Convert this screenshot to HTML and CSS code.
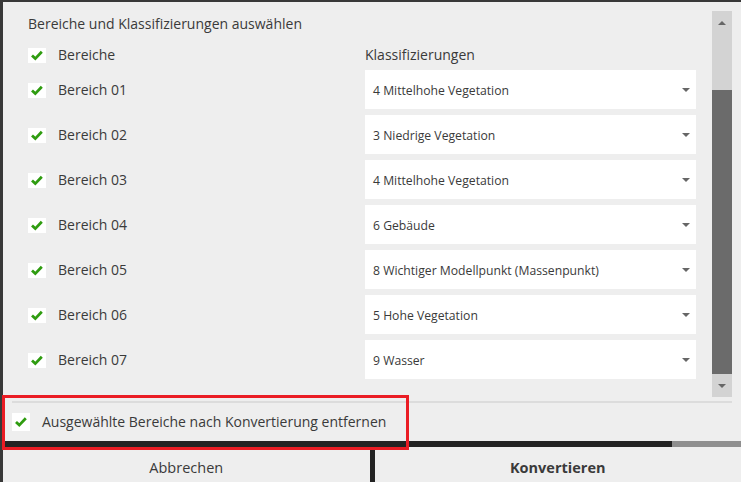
FILE: index.html
```html
<!DOCTYPE html>
<html lang="de">
<head>
<meta charset="utf-8">
<title>Bereiche und Klassifizierungen</title>
<link rel="stylesheet" href="styles.css">
</head>
<body>
<div class="window">
  <div class="main">
    <div class="list">
      <div class="heading">Bereiche und Klassifizierungen auswählen</div>
      <div class="grid header">
        <label class="check-label"><span class="box"><svg viewBox="0 0 18 15" width="18" height="15"><path d="M4 7.5 L7.3 10.6 L13.8 3.8" /></svg></span>Bereiche</label>
        <div class="col-title">Klassifizierungen</div>
      </div>
      <div class="rows">
        <div class="grid row">
          <label class="check-label"><span class="box"><svg viewBox="0 0 18 15" width="18" height="15"><path d="M4 7.5 L7.3 10.6 L13.8 3.8" /></svg></span>Bereich 01</label>
          <div class="select"><span>4 Mittelhohe Vegetation</span><i class="caret"></i></div>
        </div>
        <div class="grid row">
          <label class="check-label"><span class="box"><svg viewBox="0 0 18 15" width="18" height="15"><path d="M4 7.5 L7.3 10.6 L13.8 3.8" /></svg></span>Bereich 02</label>
          <div class="select"><span>3 Niedrige Vegetation</span><i class="caret"></i></div>
        </div>
        <div class="grid row">
          <label class="check-label"><span class="box"><svg viewBox="0 0 18 15" width="18" height="15"><path d="M4 7.5 L7.3 10.6 L13.8 3.8" /></svg></span>Bereich 03</label>
          <div class="select"><span>4 Mittelhohe Vegetation</span><i class="caret"></i></div>
        </div>
        <div class="grid row">
          <label class="check-label"><span class="box"><svg viewBox="0 0 18 15" width="18" height="15"><path d="M4 7.5 L7.3 10.6 L13.8 3.8" /></svg></span>Bereich 04</label>
          <div class="select"><span>6 Gebäude</span><i class="caret"></i></div>
        </div>
        <div class="grid row">
          <label class="check-label"><span class="box"><svg viewBox="0 0 18 15" width="18" height="15"><path d="M4 7.5 L7.3 10.6 L13.8 3.8" /></svg></span>Bereich 05</label>
          <div class="select"><span>8 Wichtiger Modellpunkt (Massenpunkt)</span><i class="caret"></i></div>
        </div>
        <div class="grid row">
          <label class="check-label"><span class="box"><svg viewBox="0 0 18 15" width="18" height="15"><path d="M4 7.5 L7.3 10.6 L13.8 3.8" /></svg></span>Bereich 06</label>
          <div class="select"><span>5 Hohe Vegetation</span><i class="caret"></i></div>
        </div>
        <div class="grid row">
          <label class="check-label"><span class="box"><svg viewBox="0 0 18 15" width="18" height="15"><path d="M4 7.5 L7.3 10.6 L13.8 3.8" /></svg></span>Bereich 07</label>
          <div class="select"><span>9 Wasser</span><i class="caret"></i></div>
        </div>
      </div>
    </div>
    <div class="scrollbar">
      <div class="sb-btn"><i class="caret up"></i></div>
      <div class="sb-track"></div>
      <div class="sb-thumb"></div>
      <div class="sb-btn"><i class="caret"></i></div>
    </div>
  </div>
  <div class="separator"></div>
  <div class="option">
    <label class="check-label"><span class="box box-lg"><svg viewBox="0 0 18 18" width="18" height="18"><path d="M4 9 L7.3 12.1 L13.8 5.3" /></svg></span>Ausgewählte Bereiche nach Konvertierung entfernen</label>
  </div>
  <div class="tabbar"><div class="tab-dark"></div><div class="tab-light"></div></div>
  <div class="buttons">
    <div class="btn">Abbrechen</div>
    <div class="divider"></div>
    <div class="btn primary">Konvertieren</div>
  </div>
  <div class="highlight"></div>
</div>
</body>
</html>
```
FILE: styles.css
```css
html, body {
  margin: 0;
  padding: 0;
}
body {
  width: 741px;
  height: 482px;
  overflow: hidden;
  background: #eeeeee;
  font-family: "Open Sans", "Noto Sans", sans-serif;
  color: #3a3a3a;
}
.window {
  position: relative;
  box-sizing: border-box;
  width: 741px;
  height: 482px;
  border-top: 2px solid #383838;
  border-left: 3px solid #383838;
  display: flex;
  flex-direction: column;
}
.main {
  display: flex;
  height: 399px;
}
.list {
  flex: 1;
  padding-left: 25px;
  display: flex;
  flex-direction: column;
}
.heading {
  margin-top: 12px;
  height: 20px;
  line-height: 20px;
  font-size: 14px;
}
.grid {
  display: grid;
  grid-template-columns: 337px 331px;
  align-items: center;
}
.header {
  margin-top: 10px;
  height: 22px;
}
.col-title {
  font-size: 14px;
  line-height: 22px;
}
.rows {
  margin-top: 4px;
  display: flex;
  flex-direction: column;
  gap: 6px;
}
.row {
  height: 39px;
}
.check-label {
  display: flex;
  align-items: center;
  gap: 12px;
  font-size: 14px;
  line-height: 20px;
}
.row .check-label {
  padding-top: 1px;
}
.box {
  width: 18px;
  height: 15px;
  background: #ffffff;
  display: flex;
}
.box-lg {
  height: 18px;
}
.box svg path {
  fill: none;
  stroke: #2f9c10;
  stroke-width: 2.8;
}
.select {
  height: 39px;
  background: #ffffff;
  display: flex;
  align-items: center;
  justify-content: space-between;
  padding: 1px 6px 0 8px;
  box-sizing: border-box;
  font-size: 12.2px;
}
.caret {
  width: 0;
  height: 0;
  border-left: 4px solid transparent;
  border-right: 4px solid transparent;
  border-top: 4px solid #666666;
}
.caret.up {
  border-top: none;
  border-bottom: 4px solid #666666;
}
.scrollbar {
  width: 20px;
  margin: 9px 9px 4px 0;
  display: flex;
  flex-direction: column;
}
.sb-btn {
  height: 23px;
  background: #d3d3d3;
  display: flex;
  align-items: center;
  justify-content: center;
}
.sb-track {
  height: 56px;
  background: #d3d3d3;
}
.sb-thumb {
  flex: 1;
  background: #6b6b6b;
}
.separator {
  height: 2px;
  margin: 0 9px 0 9px;
  background: #dcdcdc;
}
.option {
  height: 38px;
  padding-left: 9px;
  display: flex;
  align-items: center;
}
.option .check-label {
  font-size: 14px;
}
.tabbar {
  display: flex;
  height: 6px;
}
.tab-dark {
  flex: 1;
  background: #232323;
}
.tab-light {
  width: 69px;
  background: #8f8f8f;
}
.buttons {
  flex: 1;
  display: flex;
}
.btn {
  flex: 1;
  display: flex;
  justify-content: center;
  align-items: center;
  padding-top: 6px;
  font-size: 14.5px;
  color: #3a3a3a;
}
.btn.primary {
  font-weight: 700;
}
.divider {
  width: 5px;
  background: #232323;
}
.highlight {
  position: absolute;
  left: -1px;
  top: 393px;
  width: 407px;
  height: 55px;
  box-sizing: border-box;
  border: 3px solid #ea1c24;
}
```
